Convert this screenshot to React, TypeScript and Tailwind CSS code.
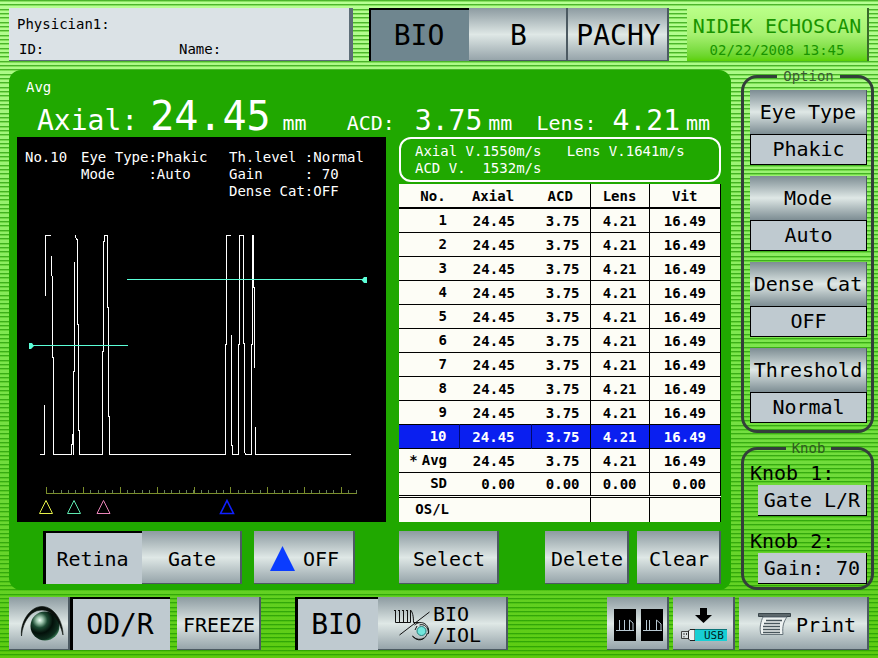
import { useState } from 'react';
import type { ReactNode } from 'react';

type Reading = {
  label: string;
  axial: string;
  acd: string;
  lens: string;
  vit: string;
};

const readings: Reading[] = Array.from({ length: 10 }, (_, i) => ({
  label: String(i + 1),
  axial: '24.45',
  acd: '3.75',
  lens: '4.21',
  vit: '16.49',
}));

const options = [
  { name: 'Eye Type', value: 'Phakic' },
  { name: 'Mode', value: 'Auto' },
  { name: 'Dense Cat', value: 'OFF' },
  { name: 'Threshold', value: 'Normal' },
];

const knobs = [
  { id: 'knob1', name: 'Knob 1:', value: 'Gate L/R' },
  { id: 'knob2', name: 'Knob 2:', value: 'Gain: 70' },
];

const raised = 'bg-linear-to-b from-[#8d9ba1] via-[#dfe8e6] to-[#94a2a8] shadow-[inset_-2px_-1px_0_#4c5a62]';
const pressed = 'bg-[#bfcad0] shadow-[inset_3px_2px_0_#000]';

type KeyProps = {
  on?: boolean;
  className: string;
  label?: string;
  onClick?: () => void;
  children: ReactNode;
};

function Key({ on, className, label, onClick, children }: KeyProps) {
  return (
    <button
      type="button"
      aria-label={label}
      aria-pressed={on}
      onClick={onClick}
      className={`flex h-[53px] shrink-0 items-center justify-center pt-0.5 ${on ? pressed : raised} ${className}`}
    >
      {children}
    </button>
  );
}

function Header() {
  return (
    <header className="flex h-[53px]">
      <div className="flex-1 bg-[#dbe2e6] border-r-4 border-b border-[#5d6d78] px-2 pt-2 text-[14px] leading-[17px]">
        <p>Physician1:</p>
        <div className="flex pt-2">
          <span className="w-[162px] pl-0.5">ID:</span>
          <span>Name:</span>
        </div>
      </div>
      <nav className="ml-4 flex text-[28px]">
        <button type="button" aria-pressed className="w-[100px] bg-[#6f868f] pt-0.5 shadow-[inset_2px_2px_0_#000]">
          BIO
        </button>
        <Key className="w-[99px]">B</Key>
        <Key className="w-[101px]">PACHY</Key>
      </nav>
      <div className="ml-[18px] w-[182px] border-r-2 border-[#3a6a2a] bg-linear-to-b from-[#baff88] via-[#a6f070] to-[#5cd000] pt-1 text-center text-[#189400]">
        <p className="text-[20px] leading-7">NIDEK ECHOSCAN</p>
        <p className="text-[14px] leading-5">02/22/2008 13:45</p>
      </div>
    </header>
  );
}

function Summary() {
  return (
    <div className="h-[67px] pl-2 pt-2 text-white">
      <p className="pl-px text-[14px] leading-[18px]">Avg</p>
      <div className="flex items-baseline whitespace-nowrap pl-3 text-[20px] leading-10">
        <span className="text-[28px]">Axial:</span>
        <span className="ml-3 text-[40px]">24.45</span>
        <span className="ml-3">mm</span>
        <span className="ml-10">ACD:</span>
        <span className="ml-5 text-[28px]">3.75</span>
        <span className="ml-1.5">mm</span>
        <span className="ml-6">Lens:</span>
        <span className="ml-4 text-[28px]">4.21</span>
        <span className="ml-1.5">mm</span>
      </div>
    </div>
  );
}

function Marker({ x, color }: { x: number; color: string }) {
  return <path d={`M${x} 500.5L${x + 6.5} 513.5H${x - 6.5}Z`} stroke={color} fill="none" />;
}

function Scope() {
  const minor = Array.from({ length: 43 }, (_, i) => 46.5 + i * 7.37).filter((x) => x < 357);
  const major = [46.5, 83.5, 120.5, 157.5, 194.5, 230.5, 267.5, 304.5, 341.5];

  return (
    <section className="w-[369px] shrink-0 bg-black pt-3 text-white">
      <div className="flex h-[50px] whitespace-pre pl-2 text-[14px] leading-[17px]">
        <p className="w-14">No.10</p>
        <div className="w-[148px]">
          <p>Eye Type:Phakic</p>
          <p>Mode    :Auto</p>
        </div>
        <div>
          <p>Th.level :Normal</p>
          <p>Gain     : 70</p>
          <p>Dense Cat:OFF</p>
        </div>
      </div>
      <svg viewBox="17 199 369 323" className="block w-full" role="img" aria-label="A-scan waveform">
        <g fill="none" stroke="#fff" shapeRendering="crispEdges">
          <path d="M45.5 296V235.5H51M51.5 256V275L52.5 277V357L53.5 358V454.5M40 454.5H44.5V405" />
          <path d="M53.5 454.5H71.5V445L72.5 444V434M73.5 454.5V372L74.5 371V262M75 235.5L76.5 239H77.5V324L78.5 325V430L79.5 431V454.5" />
          <path d="M79.5 454.5H102.5V352L103.5 351V242L104.5 241V235.5H107.5V307L108.5 308V416L109.5 417V454.5H225.5" />
          <path d="M225.5 454.5V345L226.5 344V235.5H231M231.5 335V445L232.5 446V454.5H238.5V345L239.5 344V235.5H243.5V343L244.5 344V451L245.5 454.5H251.5V345L252.5 344V235.5H253.5V287L254.5 288V368M255.5 427V454.5H351" />
        </g>
        <g fill="#5cffd8">
          <path d="M127 279H363V280H127ZM32 345H128V346H32Z" shapeRendering="crispEdges" />
          <path d="M367 277V283H364L361.500 280L364 277ZM29 343V349H31L34 346L32 343Z" />
        </g>
        <g stroke="#7b8f2c" shapeRendering="crispEdges">
          <path d="M46 493.500H357" />
          {minor.map((x) => (
            <path key={x} d={`M${x} 490V493`} stroke="#66805c" />
          ))}
          {major.map((x) => (
            <path key={x} d={`M${x} 487V493`} />
          ))}
        </g>
        <Marker x={46} color="#e6f04a" />
        <Marker x={74} color="#5fe8b0" />
        <Marker x={103.5} color="#e884b8" />
        <g strokeWidth="1.600">
          <Marker x={227} color="#1020ff" />
        </g>
      </svg>
    </section>
  );
}

const cell = 'border-r border-black text-right';

function Row({ row, selected, mark }: { row: Reading; selected?: boolean; mark?: boolean }) {
  return (
    <tr className={`h-6 border-b border-black ${selected ? 'bg-[#0a1ff0] text-white' : ''}`}>
      <th scope="row" className={`pr-3 text-right ${selected ? 'border-r border-[#000a70]' : ''}`}>
        {mark && <span className="pr-1">*</span>}
        {row.label}
      </th>
      <td className={`pr-4 pt-0.5 text-right ${selected ? 'border-r border-[#000a70]' : ''}`}>{row.axial}</td>
      <td className={`pr-2.5 pt-0.5 ${cell}`}>{row.acd}</td>
      <td className={`pr-3 pt-0.5 ${cell}`}>{row.lens}</td>
      <td className="pr-3.5 pt-0.5 text-right">{row.vit}</td>
    </tr>
  );
}

function Results() {
  return (
    <section className="flex min-w-0 flex-1 flex-col">
      <div className="h-[45px] whitespace-pre rounded-xl border-2 border-white pl-3.5 pt-1 text-[14px] leading-[17px] text-white">
        <p>Axial V.1550m/s   Lens V.1641m/s</p>
        <p>ACD V.  1532m/s</p>
      </div>
      <table className="mt-0.5 w-full table-fixed border-collapse border-r border-black bg-[#fdfdf6] text-[14px] font-bold leading-[17px] text-black">
        <colgroup>
          <col className="w-[60px]" />
          <col className="w-[72px]" />
          <col className="w-[59px]" />
          <col className="w-[59px]" />
          <col />
        </colgroup>
        <thead>
          <tr className="h-6 border-b-2 border-black">
            <th className="pl-2 pt-0.5">No.</th>
            <th className="pr-1 pt-0.5">Axial</th>
            <th className="border-r border-black pt-0.5">ACD</th>
            <th className="border-r border-black pt-0.5">Lens</th>
            <th className="pt-0.5">Vit</th>
          </tr>
        </thead>
        <tbody>
          {readings.map((r) => (
            <Row key={r.label} row={r} selected={r.label === '10'} />
          ))}
          <Row row={{ ...readings[0], label: 'Avg' }} mark />
          <Row row={{ label: 'SD', axial: '0.00', acd: '0.00', lens: '0.00', vit: '0.00' }} />
        </tbody>
        <tfoot>
          <tr className="h-[26px] border-t-3 border-double border-black">
            <th scope="row" className="pr-2.5 text-right">OS/L</th>
            <td />
            <td className={cell} />
            <td className={cell} />
            <td />
          </tr>
        </tfoot>
      </table>
    </section>
  );
}

function Sidebar() {
  return (
    <aside className="ml-2.5 w-[133px] shrink-0">
      <fieldset className="rounded-2xl border-3 border-[#333f3a] pb-[7px] pl-1.5 pr-1">
        <legend className="mx-auto px-1.5 text-[14px] leading-[14px] text-[#3b5a34]">Option</legend>
        <div className="flex flex-col gap-[11px] pt-[7px]">
          {options.map((o) => (
            <div key={o.name} className="text-center text-[20px]">
              <button
                type="button"
                className="h-11 w-full whitespace-nowrap border-r border-[#4c5a62] bg-linear-to-b from-[#7d8d93] via-[#dfe8e6] to-[#7d8d93]"
              >
                {o.name}
              </button>
              <output className="block h-[31px] border border-black bg-[#bfcad0] leading-[29px]">{o.value}</output>
            </div>
          ))}
        </div>
      </fieldset>
      <fieldset className="mt-2 rounded-2xl border-3 border-[#333f3a] pb-[3px] pl-1.5 pr-1">
        <legend className="mx-auto px-1.5 text-[14px] leading-[14px] text-[#2f5a20]">Knob</legend>
        <div className="flex flex-col gap-[13px] pt-1.5 text-[20px]">
          {knobs.map((k) => (
            <div key={k.id}>
              <label htmlFor={k.id} className="block leading-6">{k.name}</label>
              <output
                id={k.id}
                className="ml-2 block h-[31px] whitespace-nowrap border-b border-r border-black bg-[#bfcad0] text-center leading-[31px]"
              >
                {k.value}
              </output>
            </div>
          ))}
        </div>
      </fieldset>
    </aside>
  );
}

function EyeIcon() {
  return (
    <svg viewBox="0 0 44 38" className="h-[38px] w-11">
      <defs>
        <radialGradient id="iris" cx="0.32" cy="0.3" r="0.75">
          <stop offset="0" stopColor="#f4fff8" />
          <stop offset="0.15" stopColor="#9cc4ac" />
          <stop offset="0.35" stopColor="#1c4a32" />
          <stop offset="0.6" stopColor="#03100a" />
          <stop offset="0.9" stopColor="#0f3020" />
          <stop offset="1" stopColor="#2d6a48" />
        </radialGradient>
      </defs>
      <circle cx="25" cy="20" r="14.500" fill="url(#iris)" />
      <path d="M1.500 30C0 16 10 0.500 22 0.500C34 0.500 43 15 43 29C39 13 32 4 22 4C11 4 3 15 1.500 30Z" fill="#0a100c" stroke="#0a100c" strokeWidth="0.600" />
    </svg>
  );
}

function LensIcon() {
  return (
    <svg viewBox="0 0 38 34" className="h-[34px] w-[38px]" fill="none" stroke="#111">
      <path d="M1 2.500H3M5 2.500H7M9 2.500H11M13 2.500H15" />
      <path d="M2.500 3V14.500H17.500V2C19.500 4 20.500 8 20.500 14.500H26M6.500 3V14M10.500 3V14M14.500 3V14" />
      <path d="M6.500 27L36.500 4" />
      <path d="M21.500 17C29 11 37 17 35.500 25.500C35.500 19 31 15.500 26.500 17M34.500 25C32 33 24 34 19.500 28C23 32 28 32 31 30M24 18L22 22" />
      <circle cx="28.500" cy="23" r="4.500" fill="#72e6dc" stroke="#24807c" />
    </svg>
  );
}

function ScopesIcon() {
  return (
    <svg viewBox="0 0 49 32" className="h-8 w-[49px]" fill="none">
      <path d="M0 0H22V32H0ZM27 0H49V32H27Z" fill="#000" />
      <g stroke="#b9c9d2">
        <path d="M2 21.500H20M5.500 21V11M10.500 21V11M15.500 21V11L19 14V21" />
        <path d="M29 21.500H48M32.500 21V11M35.500 21V11M42.500 21V11L47 15V21" />
      </g>
    </svg>
  );
}

function UsbIcon() {
  return (
    <svg viewBox="0 0 46 34" className="h-[34px] w-[46px]">
      <path d="M19 0H26V7H31L22.500 15L14 7H19Z" fill="#000" />
      <path d="M0.500 23.500H8V30.500H0.500ZM3 25V27M3 28V29.500M5.500 25V27" fill="#d8dedf" stroke="#444" />
      <path d="M14 21.500H9L7.500 23V31L9 32.500H14Z" fill="#eef2f2" stroke="#222" />
      <rect x="14" y="21" width="32" height="12" fill="#18cfd4" />
      <path d="M14 21.500H46" stroke="#0b7478" />
      <text x="23" y="31" fontSize="11" fill="#022">USB</text>
    </svg>
  );
}

function PrintIcon() {
  return (
    <svg viewBox="0 0 34 24" className="h-6 w-[34px] shrink-0">
      <path d="M0.500 0.500H32.500V3.500H0.500Z" fill="#5d686c" stroke="#39454a" />
      <path d="M5 4H29C26 8 24 13 25 21.500H3C1 15 3 8 5 4Z" fill="#eef3f2" stroke="#66737a" />
      <path d="M8 7.500H24M6 10.500H22M5 13.500H22M5 16.500H22M5 19.500H22" stroke="#48565c" strokeWidth="1.400" />
    </svg>
  );
}

export default function App() {
  const [side, setSide] = useState('OD/R');

  return (
    <div className="flex min-h-screen flex-col bg-linear-to-b from-[#b8ff94] via-[#7fe850] to-[#5ccb0e] font-['DejaVu_Sans_Mono','Liberation_Mono',monospace] text-black">
      <div className="flex flex-1 flex-col bg-[repeating-linear-gradient(to_bottom,#1e9600b3_0_1px,#2fae0059_1px_2px,transparent_2px_4px,#1e9600b3_4px_5px,#2fae0059_5px_6px,transparent_6px_9px,#1e9600b3_9px_10px,#2fae0059_10px_11px,transparent_11px_13px)] pl-[9px] pr-1 pt-2">
        <div className="pr-[5px]">
          <Header />
        </div>

        <main className="mt-2 flex">
          <div className="mt-px min-w-0 flex-1 rounded-xl bg-[#20a800] pb-1.5 pl-2 pr-2.5">
            <Summary />
            <div className="flex gap-[13px]">
              <Scope />
              <Results />
            </div>
            <div className="mt-[9px] flex pl-[26px] text-[20px]">
              <Key on className="w-[99px]">Retina</Key>
              <Key className="w-[100px]">Gate</Key>
              <Key className="ml-3 w-[101px] gap-2">
                <svg viewBox="0 0 25 25" className="size-[25px]" aria-hidden="true">
                  <path d="M12.500 0L25 25H0Z" fill="#0a3cff" />
                </svg>
                OFF
              </Key>
              <Key className="ml-11 w-[100px]">Select</Key>
              <Key className="ml-auto w-[84px]">Delete</Key>
              <Key className="ml-2 w-[84px]">Clear</Key>
            </div>
          </div>
          <Sidebar />
        </main>

        <footer className="mt-[7px] flex pb-[7px] pr-[5px] text-[20px]">
          <Key className="w-[61px] pl-1" label="Eye side">
            <EyeIcon />
          </Key>
          <Key on className="w-[100px] text-[28px]" onClick={() => setSide(side === 'OD/R' ? 'OS/L' : 'OD/R')}>
            {side}
          </Key>
          <Key className="ml-[7px] w-[84px]">FREEZE</Key>
          <Key on className="ml-[34px] w-[83px] text-[28px]">BIO</Key>
          <Key className="w-[130px] gap-0.5 pr-3" label="BIO/IOL">
            <LensIcon />
            <span className="whitespace-pre text-left leading-[21px]">{'BIO\n/IOL'}</span>
          </Key>
          <Key className="ml-auto w-[62px]" label="Compare scans">
            <ScopesIcon />
          </Key>
          <Key className="ml-1 w-[62px]" label="Save to USB">
            <UsbIcon />
          </Key>
          <Key className="ml-1 w-[130px] gap-1 pl-1.5" label="Print">
            <PrintIcon />
            Print
          </Key>
        </footer>
      </div>
    </div>
  );
}
